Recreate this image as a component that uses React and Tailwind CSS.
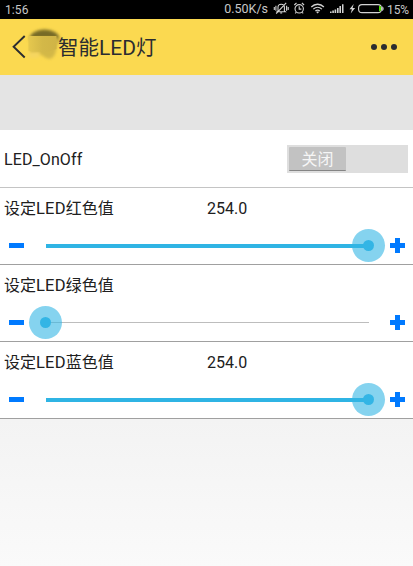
import React from 'react';

function StatusIcons() {
  return (
    <svg width="112" height="19" viewBox="273 0 112 19" fill="none" stroke="#d2d2d2" strokeWidth="1.1" className="shrink-0">
      {/* muted bell */}
      <path d="M278 10.8V7.3c0-1.7 1.2-3 3.2-3s3.2 1.3 3.2 3v3.5l1 1h-8.4zM280.2 13h2M275.9 5.8v5M274.3 7v3M286.6 5.8v5M288.2 7v3M286.2 2.8l-10 10.8" />
      {/* alarm clock */}
      <circle cx="299.2" cy="8.8" r="4.2" />
      <path d="M299.2 6.3v2.8h2.2M294.3 5l2.2-2M304.1 5l-2.2-2M296.2 12.4l-1 1M302.2 12.4l1 1" />
      {/* wifi */}
      <path d="M311.3 7c3.6-3.7 9-3.7 12.6 0M313.3 9.1c2.5-2.4 6.1-2.4 8.6 0M315.4 11.1c1.4-1.2 3-1.2 4.4 0" strokeWidth="1.3" />
      <path d="M316.2 12l1.4 1.6 1.4-1.6c-.8-.6-2-.6-2.8 0z" fill="#d2d2d2" stroke="none" />
      {/* signal strength */}
      <path d="M330 11.5h1.6V13H330zM332.3 10.5h1.6V13h-1.6zM334.6 9.5h1.6V13h-1.6zM337 8h1.6v5H337zM339.4 6h1.6v7h-1.6zM342 4.2h1.5V13H342z" fill="#d2d2d2" stroke="none" />
      {/* charging battery */}
      <path d="M353.7 4l-4.2 5.2h2.4l-1.2 4.2 4.4-5.4h-2.5z" fill="#d2d2d2" stroke="none" />
      <rect x="358.6" y="4.6" width="22.8" height="8" rx="3.4" />
      <path d="M382.2 6.2c1.9.8 1.9 4 0 4.8z" fill="#d2d2d2" stroke="none" />
      <path d="M379 6h1.2q.8.2.8 1.2v2.8q0 1-.8 1.2H379z" fill="#4fe000" stroke="none" />
    </svg>
  );
}

function Thumb({ side }) {
  return (
    <div
      className={
        'absolute top-1/2 -mt-[17px] flex size-[33px] items-center justify-center rounded-full bg-[#33b5e5]/60 ' +
        (side === 'right' ? '-right-[16px]' : '-left-[17px]')
      }
    >
      <div className="size-[11px] rounded-full bg-[#33b5e5]" />
    </div>
  );
}

function SliderRow({ label, value }) {
  const full = value !== '';
  return (
    <section className="flex h-[77px] flex-col border-b border-[#a0a0a0] bg-white">
      <div className="flex h-[39px] items-center pl-1 pt-[2px] text-base leading-none">
        <span className="w-[203px] whitespace-nowrap font-['Noto_Sans_CJK_SC',sans-serif]">
          {label[0]}
          <span className="font-[Roboto,sans-serif] text-[16.5px] tracking-[0.2px]">LED</span>
          {label[1]}
        </span>
        <span>{value}</span>
      </div>
      <div className="flex h-[37px] items-center pl-[9px] pr-2">
        <div className="h-[5px] w-[14.5px] shrink-0 bg-[#007aff]" />
        <div className="relative ml-[22px] flex h-[37px] w-[323px] shrink-0 items-center">
          <div className={full ? 'h-1 w-full bg-[#2fb4e4]' : 'h-px w-full bg-[#bdbdbd]'} />
          <Thumb side={full ? 'right' : 'left'} />
        </div>
        <svg width="15" height="15" viewBox="0 0 15 15" className="ml-auto shrink-0" fill="#007aff">
          <path d="M5 0h5v5h5v5h-5v5H5v-5H0V5h5z" />
        </svg>
      </div>
    </section>
  );
}

export default function App() {
  return (
    <main className="flex h-[566px] w-[413px] flex-col overflow-hidden bg-[#f3f3f3] font-[Roboto,'Noto_Sans_CJK_SC',sans-serif] text-[#202020]">
      <div className="flex h-[19px] shrink-0 items-center bg-black pl-[5px] pr-1 text-[12px] leading-none text-[#c8c8c8]">
        <span className="tracking-[0.1px]">1:56</span>
        <span className="ml-auto mr-[5px] text-[12.5px]">0.50K/s</span>
        <StatusIcons />
        <span className="ml-[2px] w-[22px] whitespace-nowrap text-[12px] tracking-[-0.1px]">15%</span>
      </div>
      <header className="flex h-14 shrink-0 items-center bg-[#fbd950] pl-[10px] pr-4 text-[#2b2c30]">
        <svg width="48" height="56" viewBox="10 19 48 56" className="shrink-0 overflow-visible">
          <defs>
            <filter id="smudge" x="-30%" y="-30%" width="160%" height="160%">
              <feGaussianBlur stdDeviation="1.5" />
            </filter>
            <linearGradient id="fade" x1="0" x2="1" y1="0" y2="0">
              <stop offset="0" stopColor="#e6c84e" />
              <stop offset="0.5" stopColor="#d3b848" />
              <stop offset="1" stopColor="#d0b446" />
            </linearGradient>
          </defs>
          <g filter="url(#smudge)">
            <ellipse cx="44.5" cy="39" rx="15" ry="9.5" fill="#776a27" />
            <path d="M30 38h29l-3 13c-2 9-8 10-14 4l-12-1z" fill="#d3b846" />
            <path d="M29 52h11l-1 6h-10z" fill="#f6d65e" />
          </g>
          <path d="M28.5 36h28v13l-9 3-19-1z" fill="url(#fade)" />
          <path d="M24.7 36L13.6 46.7l11.1 10.8" fill="none" stroke="#2b2c30" strokeWidth="1.9" />
        </svg>
        <h1 className="whitespace-nowrap pt-[2px] text-[20.5px] font-normal leading-none">智能<span className="text-[21px]">LED</span>灯</h1>
        <div className="ml-auto flex gap-[3.7px]">
          <i className="size-[6.2px] rounded-full bg-[#2b2c30]" />
          <i className="size-[6.2px] rounded-full bg-[#2b2c30]" />
          <i className="size-[6.2px] rounded-full bg-[#2b2c30]" />
        </div>
      </header>
      <div className="h-[55px] shrink-0 bg-[#e4e4e4]" />
      <section className="flex h-[58px] shrink-0 items-center justify-between border-b border-[#c4c4c4] bg-white pl-1 pr-[5px]">
        <span className="pt-[2px] text-base leading-none tracking-[0.1px]">LED_OnOff</span>
        <div className="flex h-7 w-[121px] items-center bg-[#dedede] pl-[2px]">
          <div className="flex h-6 w-[57px] items-center justify-center rounded-[1px] border-b border-[#858585] bg-[#c2c2c2] pt-[3px] text-[16px] leading-none text-[#f6f6f6]">关闭</div>
        </div>
      </section>
      <SliderRow label={['设定', '红色值']} value="254.0" />
      <SliderRow label={['设定', '绿色值']} value="" />
      <SliderRow label={['设定', '蓝色值']} value="254.0" />
      <div className="grow bg-linear-to-b from-[#f3f3f3] to-[#fafafa]" />
    </main>
  );
}
